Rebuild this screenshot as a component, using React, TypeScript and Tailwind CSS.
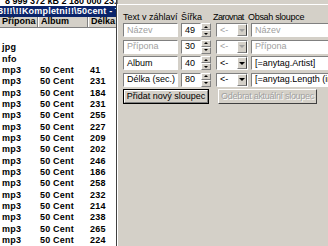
const rows: [string, string, string][] = [
  ['', '', ''],
  ['jpg', '', ''],
  ['nfo', '', ''],
  ['mp3', '50 Cent', '41'],
  ['mp3', '50 Cent', '231'],
  ['mp3', '50 Cent', '184'],
  ['mp3', '50 Cent', '231'],
  ['mp3', '50 Cent', '255'],
  ['mp3', '50 Cent', '227'],
  ['mp3', '50 Cent', '209'],
  ['mp3', '50 Cent', '202'],
  ['mp3', '50 Cent', '246'],
  ['mp3', '50 Cent', '186'],
  ['mp3', '50 Cent', '258'],
  ['mp3', '50 Cent', '232'],
  ['mp3', '50 Cent', '214'],
  ['mp3', '50 Cent', '238'],
  ['mp3', '50 Cent', '265'],
  ['mp3', '50 Cent', '224'],
]

const columns = [
  { title: 'Název', width: '49', align: '<-', content: 'Název', enabled: false },
  { title: 'Přípona', width: '30', align: '<-', content: 'Přípona', enabled: false },
  { title: 'Album', width: '40', align: '<-', content: '[=anytag.Artist]', enabled: true },
  { title: 'Délka (sec.)', width: '80', align: '<-', content: '[=anytag.Length (in sec.)]', enabled: true },
]

const sunken = 'border border-t-[#808080] border-l-[#808080] border-b-white border-r-white bg-white'

const Spinner = () => (
  <div className="flex flex-col w-[10px] h-[14px]">
    <div className="flex-1 flex items-center justify-center bg-[#d4d0c8] border border-t-white border-l-white border-b-[#808080] border-r-[#808080]">
      <span className="w-0 h-0 border-l-[2px] border-r-[2px] border-b-[2px] border-l-transparent border-r-transparent border-b-black"></span>
    </div>
    <div className="flex-1 flex items-center justify-center bg-[#d4d0c8] border border-t-white border-l-white border-b-[#808080] border-r-[#808080]">
      <span className="w-0 h-0 border-l-[2px] border-r-[2px] border-t-[2px] border-l-transparent border-r-transparent border-t-black"></span>
    </div>
  </div>
)

const Combo = ({ value, enabled }: { value: string; enabled: boolean }) => (
  <div className={`${sunken} flex items-center w-[32px] h-[14px] ml-[5px]`}>
    <span className={`flex-1 pl-[3px] ${enabled ? 'text-black' : 'text-[#a0a0a0]'}`}>{value}</span>
    <div className="w-[10px] h-full flex items-center justify-center bg-[#d4d0c8] border border-t-white border-l-white border-b-[#808080] border-r-[#404040]">
      <span className={`w-0 h-0 border-l-[3px] border-r-[3px] border-t-[3px] border-l-transparent border-r-transparent ${enabled ? 'border-t-black' : 'border-t-[#a0a0a0]'}`}></span>
    </div>
  </div>
)

export default function App() {
  return (
    <div
      className="flex w-[328px] h-[246px] overflow-hidden bg-[#d4d0c8] text-[9px] leading-none"
      style={{ fontFamily: '"Liberation Sans", Arial, sans-serif' }}
    >
      <div className="w-[116px] shrink-0 flex flex-col bg-white overflow-hidden">
        <div className="h-[8px] overflow-hidden whitespace-nowrap font-bold pl-[5px]">
          <div className="-mt-[3px]">8 999 372 kB 2 180 000 23.</div>
        </div>
        <div className="h-[13px] bg-[#0a246a] text-white font-bold whitespace-nowrap flex items-center -ml-[2px] tracking-[0.2px]">
          8!!!\!!Kompletni!!\50cent - T
        </div>
        <div className="h-[13px] flex bg-[#d4d0c8] font-bold whitespace-nowrap border-b border-[#808080]">
          <div className="w-[38px] pl-[2px] flex items-center border-r border-[#808080]">Přípona</div>
          <div className="w-[50px] pl-[2px] flex items-center border-r border-[#808080] border-l border-l-white">Album</div>
          <div className="flex-1 pl-[2px] flex items-center border-l border-l-white">Délka</div>
        </div>
        <div className="flex flex-col font-bold pt-[3px] tracking-[0.2px]">
          {rows.map((r, i) => (
            <div key={i} className="h-[11.33px] flex items-center whitespace-nowrap">
              <span className="w-[40px] pl-[2px]">{r[0]}</span>
              <span className="w-[50px]">{r[1]}</span>
              <span>{r[2]}</span>
            </div>
          ))}
        </div>
      </div>
      <div className="flex-1 flex flex-col border-l border-[#404040]">
        <div className="h-[4px] border-l border-[#808080]"></div>
        <div className="flex-1 border-t border-l border-white pl-[5px] pt-[8px] whitespace-nowrap overflow-hidden">
          <div className="flex h-[8px] items-center mb-[2px]">
            <span className="w-[58px]">Text v záhlaví</span>
            <span className="w-[32px]">Šířka</span>
            <span className="w-[35px] tracking-[-0.6px]">Zarovnat</span>
            <span className="tracking-[-0.3px]">Obsah sloupce</span>
          </div>
          <div className="flex flex-col gap-[2.5px]">
            {columns.map((c, i) => (
              <div key={i} className="flex items-center h-[14px]">
                <div className={`${sunken} w-[55px] h-[14px] flex items-center pl-[3px] ${c.enabled ? 'text-black' : 'text-[#a0a0a0]'}`}>
                  {c.title}
                </div>
                <div className={`${sunken} w-[20px] h-[14px] ml-[3px] flex items-center pl-[3px]`}>{c.width}</div>
                <Spinner />
                <Combo value={c.align} enabled={c.enabled} />
                <div className={`${sunken} w-[110px] shrink-0 h-[14px] ml-[3px] flex items-center pl-[3px] ${c.enabled ? 'text-black' : 'text-[#a0a0a0]'}`}>
                  {c.content}
                </div>
              </div>
            ))}
          </div>
          <div className="flex mt-[2px] gap-[9px]">
            <div className="w-[86px] h-[15px] border border-black flex">
              <div className="flex-1 flex items-center justify-center bg-[#d4d0c8] border border-t-white border-l-white border-b-[#808080] border-r-[#808080]">
                Přidat nový sloupec
              </div>
            </div>
            <div className="w-[99px] h-[15px] flex items-center justify-center bg-[#d4d0c8] border border-t-white border-l-white border-b-[#404040] border-r-[#404040] text-[#a0a0a0] tracking-[-0.3px] [text-shadow:1px_1px_0_white]">
              Odebrat aktuální sloupec
            </div>
          </div>
        </div>
      </div>
    </div>
  )
}
